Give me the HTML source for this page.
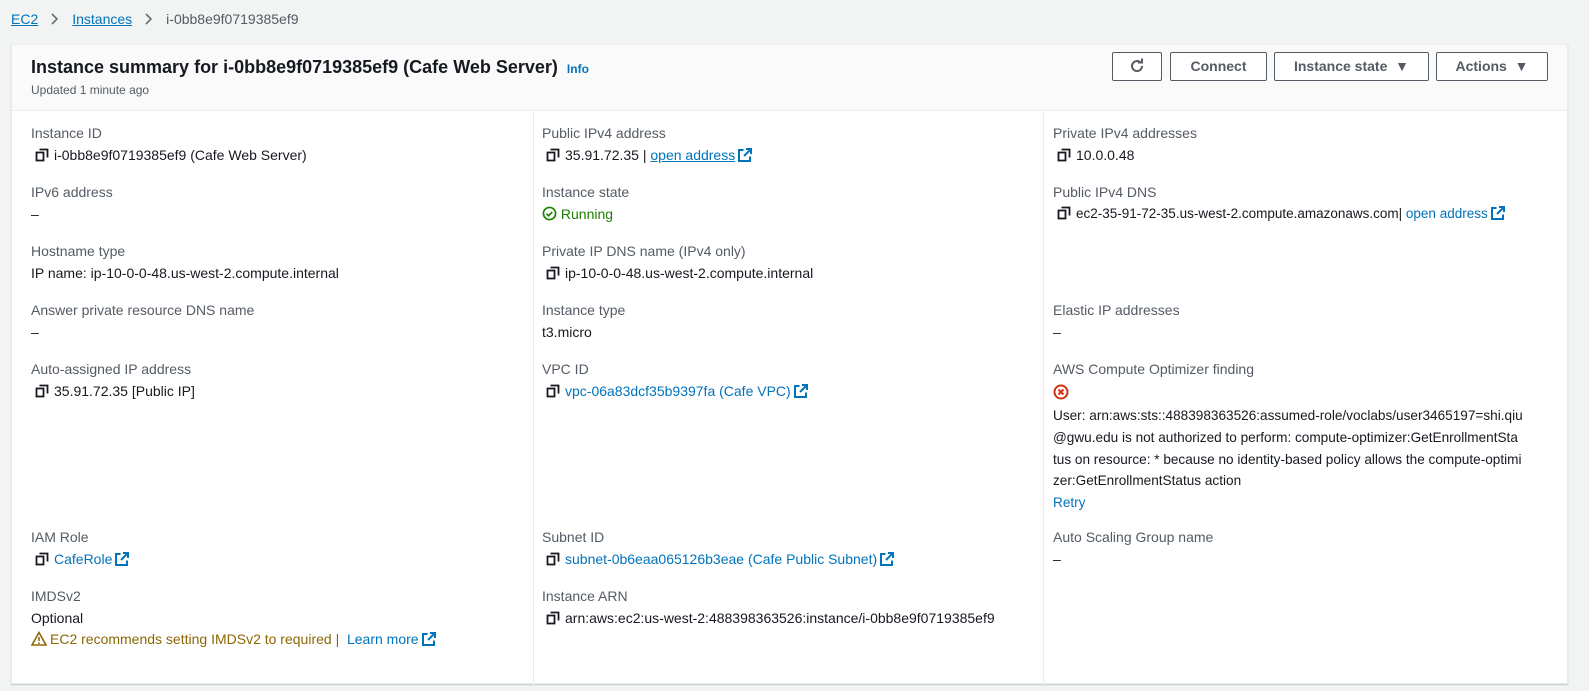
<!DOCTYPE html>
<html><head><meta charset="utf-8"><style>
*{margin:0;padding:0;box-sizing:border-box}
body{width:1589px;height:667px;background:#f2f3f3;font-family:"Liberation Sans",sans-serif;font-size:14px;color:#16191f;position:relative;overflow:hidden}
.a{position:absolute;white-space:nowrap}
a,.lk{color:#0073bb;text-decoration:none}
.bc a{text-decoration:underline;color:#0073bb}
.card{position:absolute;left:11px;top:44px;width:1557px;height:640px;background:#fff;border:1px solid #eaeded;box-shadow:0 1px 1px rgba(0,28,36,.2)}
.hdr{position:absolute;left:0;top:0;width:100%;height:66px;background:#fafafa;border-bottom:1px solid #eaeded}
.lab{color:#545b64}
.btn{position:absolute;top:7px;height:29px;border:1px solid #545b64;border-radius:2px;background:#fff;font-weight:bold;color:#545b64;font-size:14px;line-height:27px;text-align:center}
.vd{position:absolute;top:66px;width:1px;height:580px;background:#eaeded}
svg{vertical-align:-2px}
.ic{margin-right:5px}
.ex{margin-left:3px}
</style></head><body>
<svg width="0" height="0" style="position:absolute"><defs>
<symbol id="cp" viewBox="0 0 14 14"><path d="M4.5 1.5h8v8" fill="none" stroke="#16191f" stroke-width="1.8"/><rect x="1.5" y="4.5" width="7" height="8" fill="none" stroke="#16191f" stroke-width="1.8"/></symbol>
<symbol id="ex" viewBox="0 0 14 14"><path d="M8 1h5v5M13 1L6 8M5.5 2H1v11h11V8.5" fill="none" stroke="#0073bb" stroke-width="2"/></symbol>
<symbol id="ch" viewBox="0 0 10 14"><path d="M2 2l5 5-5 5" fill="none" stroke="#687078" stroke-width="1.6"/></symbol>
</defs></svg>
<div class="a bc" style="left:11px;top:11px"><a>EC2</a><svg width="10" height="14" style="margin:0 12px"><use href="#ch"/></svg><a>Instances</a><svg width="10" height="14" style="margin:0 12px"><use href="#ch"/></svg><span style="color:#545b64">i-0bb8e9f0719385ef9</span></div>
<div class="card">
<div class="hdr">
<div class="a" style="left:19px;top:12px;font-size:18px;font-weight:bold">Instance summary for i-0bb8e9f0719385ef9 (Cafe Web Server) <span style="font-size:12px;color:#0073bb;margin-left:4px">Info</span></div>
<div class="a lab" style="left:19px;top:38px;font-size:12px">Updated 1 minute ago</div>
<div class="btn" style="left:1100px;width:50px"><svg width="16" height="16" viewBox="0 0 16 16" style="vertical-align:-3px"><path d="M13 8A5 5 0 1 1 11.5 4.5" fill="none" stroke="#545b64" stroke-width="2"/><path d="M9 4.5h4v-4" fill="none" stroke="#545b64" stroke-width="2"/></svg></div>
<div class="btn" style="left:1158px;width:97px">Connect</div>
<div class="btn" style="left:1262px;width:155px">Instance state &nbsp;▼</div>
<div class="btn" style="left:1424px;width:112px">Actions &nbsp;▼</div>
</div>
<div class="vd" style="left:521px"></div><div class="vd" style="left:1031px"></div>
</div>
<!-- col1 -->
<div class="a lab" style="left:31px;top:125px">Instance ID</div>
<div class="a" style="left:35px;top:147px"><svg class="ic" width="14" height="14"><use href="#cp"/></svg>i-0bb8e9f0719385ef9 (Cafe Web Server)</div>
<div class="a lab" style="left:31px;top:184px">IPv6 address</div>
<div class="a" style="left:31px;top:206px">–</div>
<div class="a lab" style="left:31px;top:243px">Hostname type</div>
<div class="a" style="left:31px;top:265px">IP name: ip-10-0-0-48.us-west-2.compute.internal</div>
<div class="a lab" style="left:31px;top:302px">Answer private resource DNS name</div>
<div class="a" style="left:31px;top:324px">–</div>
<div class="a lab" style="left:31px;top:361px">Auto-assigned IP address</div>
<div class="a" style="left:35px;top:383px"><svg class="ic" width="14" height="14"><use href="#cp"/></svg>35.91.72.35 [Public IP]</div>
<div class="a lab" style="left:31px;top:529px">IAM Role</div>
<div class="a" style="left:35px;top:551px"><svg class="ic" width="14" height="14"><use href="#cp"/></svg><span class="lk">CafeRole</span><svg class="ex" width="14" height="14"><use href="#ex"/></svg></div>
<div class="a lab" style="left:31px;top:588px">IMDSv2</div>
<div class="a" style="left:31px;top:610px">Optional</div>
<div class="a" style="left:31px;top:631px;color:#8d6605"><svg width="16" height="15" viewBox="0 0 16 15" style="margin-right:3px"><path d="M8 1.5L15 14H1z" fill="none" stroke="#8d6605" stroke-width="1.6"/><path d="M8 6v4M8 11.5v1.5" stroke="#8d6605" stroke-width="1.6"/></svg>EC2 recommends setting IMDSv2 to required | &nbsp;<span class="lk">Learn more</span><svg class="ex" width="14" height="14"><use href="#ex"/></svg></div>
<!-- col2 -->
<div class="a lab" style="left:542px;top:125px">Public IPv4 address</div>
<div class="a" style="left:546px;top:147px"><svg class="ic" width="14" height="14"><use href="#cp"/></svg>35.91.72.35 | <span class="lk" style="text-decoration:underline">open address</span><svg class="ex" width="14" height="14"><use href="#ex"/></svg></div>
<div class="a lab" style="left:542px;top:184px">Instance state</div>
<div class="a" style="left:542px;top:206px;color:#1d8102"><svg width="15" height="15" viewBox="0 0 16 16"><circle cx="8" cy="8" r="6.5" fill="none" stroke="#1d8102" stroke-width="1.8"/><path d="M4.8 8.2l2.2 2.2 4-4" fill="none" stroke="#1d8102" stroke-width="1.8"/></svg> Running</div>
<div class="a lab" style="left:542px;top:243px">Private IP DNS name (IPv4 only)</div>
<div class="a" style="left:546px;top:265px"><svg class="ic" width="14" height="14"><use href="#cp"/></svg>ip-10-0-0-48.us-west-2.compute.internal</div>
<div class="a lab" style="left:542px;top:302px">Instance type</div>
<div class="a" style="left:542px;top:324px">t3.micro</div>
<div class="a lab" style="left:542px;top:361px">VPC ID</div>
<div class="a" style="left:546px;top:383px"><svg class="ic" width="14" height="14"><use href="#cp"/></svg><span class="lk">vpc-06a83dcf35b9397fa (Cafe VPC)</span><svg class="ex" width="14" height="14"><use href="#ex"/></svg></div>
<div class="a lab" style="left:542px;top:529px">Subnet ID</div>
<div class="a" style="left:546px;top:551px"><svg class="ic" width="14" height="14"><use href="#cp"/></svg><span class="lk">subnet-0b6eaa065126b3eae (Cafe Public Subnet)</span><svg class="ex" width="14" height="14"><use href="#ex"/></svg></div>
<div class="a lab" style="left:542px;top:588px">Instance ARN</div>
<div class="a" style="left:546px;top:610px"><svg class="ic" width="14" height="14"><use href="#cp"/></svg>arn:aws:ec2:us-west-2:488398363526:instance/i-0bb8e9f0719385ef9</div>
<!-- col3 -->
<div class="a lab" style="left:1053px;top:125px">Private IPv4 addresses</div>
<div class="a" style="left:1057px;top:147px"><svg class="ic" width="14" height="14"><use href="#cp"/></svg>10.0.0.48</div>
<div class="a lab" style="left:1053px;top:184px">Public IPv4 DNS</div>
<div class="a" style="left:1057px;top:206px;font-size:13.5px"><svg class="ic" width="14" height="14"><use href="#cp"/></svg>ec2-35-91-72-35.us-west-2.compute.amazonaws.com| <span class="lk">open address</span><svg class="ex" width="14" height="14"><use href="#ex"/></svg></div>
<div class="a lab" style="left:1053px;top:302px">Elastic IP addresses</div>
<div class="a" style="left:1053px;top:324px">–</div>
<div class="a lab" style="left:1053px;top:361px">AWS Compute Optimizer finding</div>
<div class="a" style="left:1053px;top:384px"><svg width="16" height="16" viewBox="0 0 16 16"><circle cx="8" cy="8" r="6.5" fill="none" stroke="#d13212" stroke-width="2"/><path d="M5.5 5.5l5 5M10.5 5.5l-5 5" stroke="#d13212" stroke-width="2"/></svg></div>
<div class="a" style="left:1053px;top:405px;line-height:21.8px;font-size:13.6px">User: arn:aws:sts::488398363526:assumed-role/voclabs/user3465197=shi.qiu<br>@gwu.edu is not authorized to perform: compute-optimizer:GetEnrollmentSta<br>tus on resource: * because no identity-based policy allows the compute-optimi<br>zer:GetEnrollmentStatus action<br><span class="lk">Retry</span></div>
<div class="a lab" style="left:1053px;top:529px">Auto Scaling Group name</div>
<div class="a" style="left:1053px;top:551px">–</div>
</body></html>
